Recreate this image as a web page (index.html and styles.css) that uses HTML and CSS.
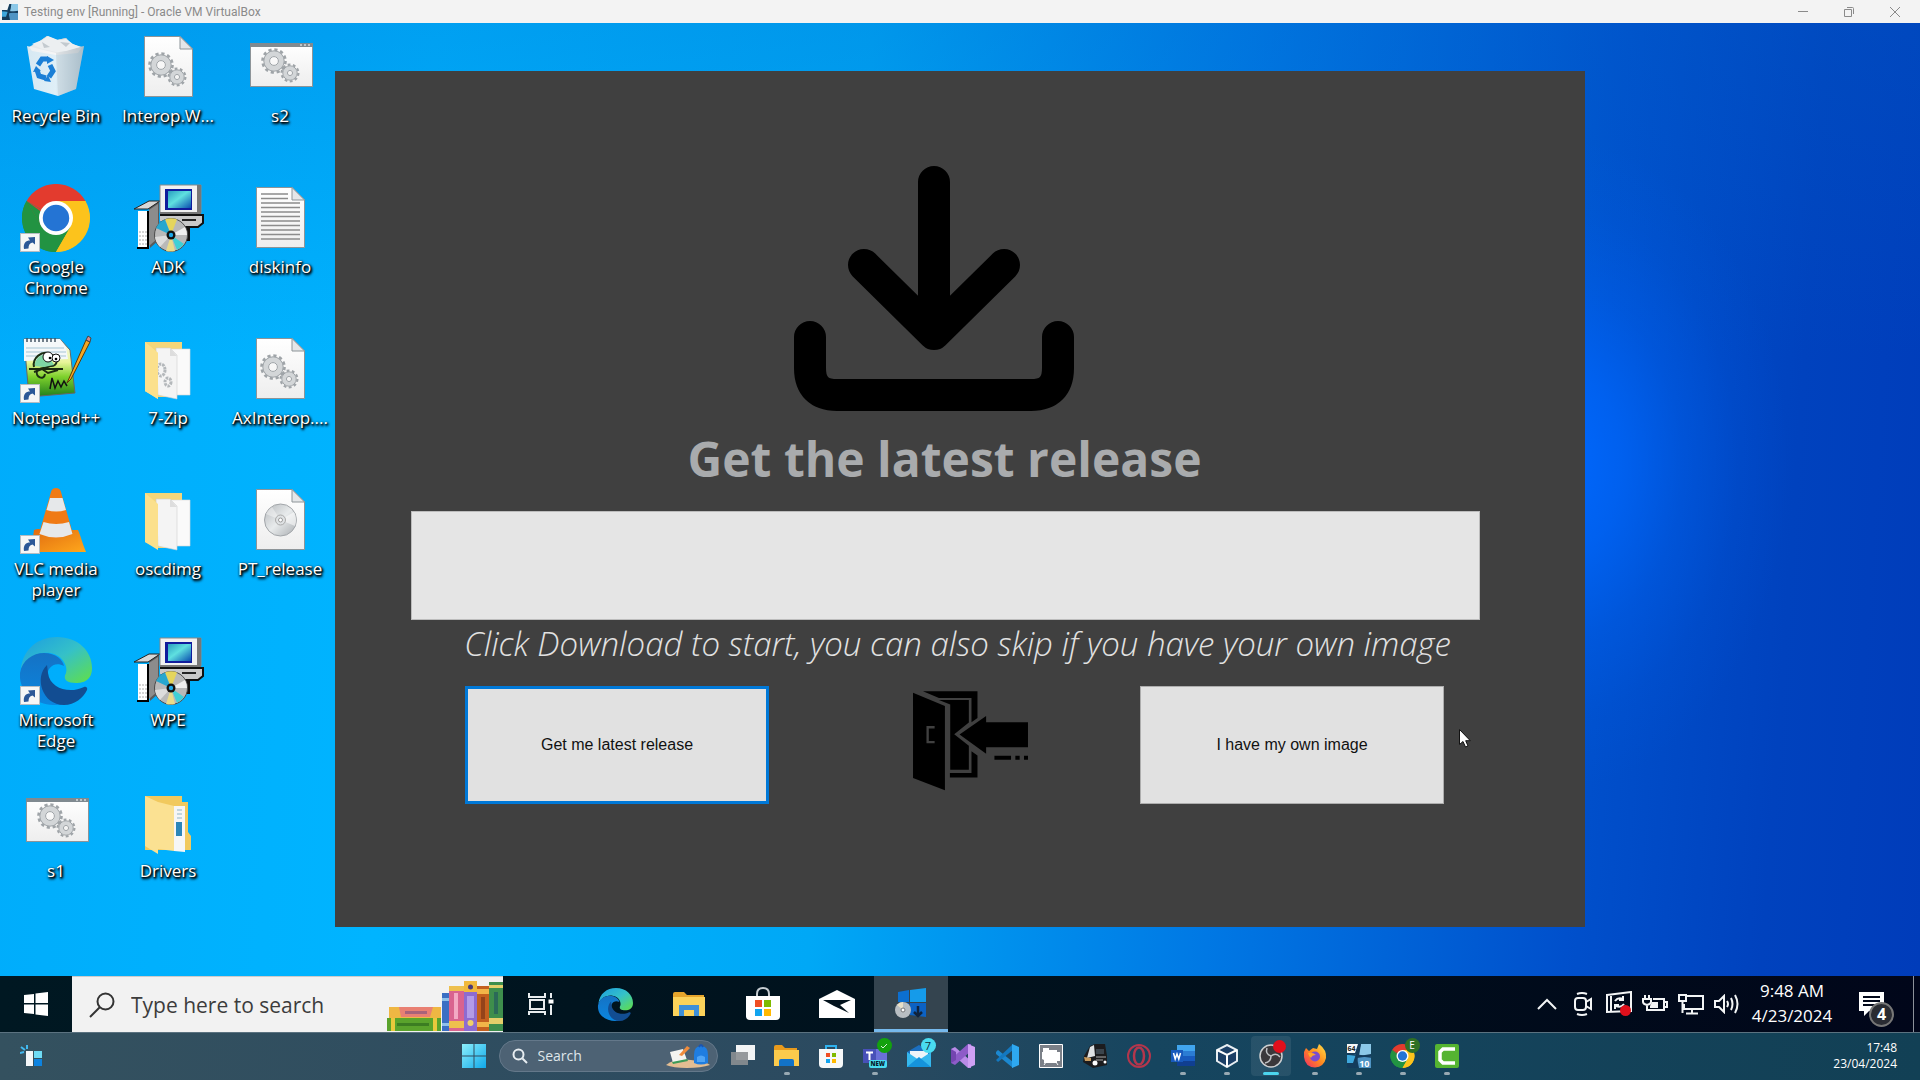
FILE: index.html
```html
<!DOCTYPE html>
<html lang="en">
<head>
<meta charset="utf-8">
<title>Testing env [Running] - Oracle VM VirtualBox</title>
<link rel="stylesheet" href="styles.css">
</head>
<body>
<svg class="defs" aria-hidden="true">
  <defs>
    <linearGradient id="gScreen" x1="0" y1="0" x2="1" y2="1"><stop offset="0" stop-color="#2a9fc0"/><stop offset=".45" stop-color="#5fe0e0"/><stop offset="1" stop-color="#0a4fb0"/></linearGradient>
    <linearGradient id="gEdgeTop" x1="0" y1="0" x2="1" y2="1"><stop offset="0" stop-color="#1b9de2"/><stop offset=".5" stop-color="#35c1c8"/><stop offset="1" stop-color="#62e045"/></linearGradient>
    <linearGradient id="gEdgeMid" x1="0" y1="0" x2="0" y2="1"><stop offset="0" stop-color="#1572c4"/><stop offset="1" stop-color="#0a86e0"/></linearGradient>
    <linearGradient id="gPage" x1="0" y1="0" x2="0" y2="1"><stop offset="0" stop-color="#ffffff"/><stop offset="1" stop-color="#eeeeee"/></linearGradient>
    <linearGradient id="gNote" x1="0" y1="0" x2="0" y2="1"><stop offset="0" stop-color="#f8f8f8"/><stop offset=".4" stop-color="#e8f59a"/><stop offset=".65" stop-color="#7ed12c"/><stop offset="1" stop-color="#1f7d1c"/></linearGradient>
    <linearGradient id="gCone" x1="0" y1="0" x2="1" y2="1"><stop offset="0" stop-color="#e06a10"/><stop offset="1" stop-color="#ffa81c"/></linearGradient>
    <linearGradient id="gDisc" x1="0" y1="0" x2="1" y2="1"><stop offset="0" stop-color="#b4b8bc"/><stop offset=".5" stop-color="#e8ebec"/><stop offset="1" stop-color="#a8acb0"/></linearGradient>
    <linearGradient id="gWin" x1="0" y1="0" x2="1" y2="1"><stop offset="0" stop-color="#8cf0fb"/><stop offset="1" stop-color="#10a8ea"/></linearGradient>
    <linearGradient id="gFox" x1="1" y1="0" x2="0" y2="1"><stop offset="0" stop-color="#ffe44a"/><stop offset=".5" stop-color="#ff8a1e"/><stop offset="1" stop-color="#f0266a"/></linearGradient>
    <linearGradient id="gBin" x1="0" y1="0" x2="1" y2="0"><stop offset="0" stop-color="#eef1f3"/><stop offset=".5" stop-color="#f8f8f8"/><stop offset="1" stop-color="#b9c3ca"/></linearGradient>

    <symbol id="gears" viewBox="0 0 40 40">
      <g fill="none" stroke="#9fa4a8">
        <circle cx="14" cy="14" r="11.5" stroke-width="2.6" stroke-dasharray="3.2 2.82"/>
        <circle cx="14" cy="14" r="7.4" stroke="#d3d6d8" stroke-width="5.6"/>
        <circle cx="14" cy="14" r="10.2" stroke-width="1"/>
        <circle cx="14" cy="14" r="4.4" stroke-width="1"/>
        <circle cx="30" cy="26" r="8.4" stroke-width="2.2" stroke-dasharray="2.8 2.48"/>
        <circle cx="30" cy="26" r="5" stroke="#d3d6d8" stroke-width="4"/>
        <circle cx="30" cy="26" r="7.2" stroke-width="1"/>
        <circle cx="30" cy="26" r="2.6" stroke-width="1"/>
      </g>
    </symbol>
    <symbol id="page" viewBox="0 0 72 72">
      <path d="M12.500 5.500H48L60.500 18V65.500H12.500Z" fill="url(#gPage)" stroke="#8d9498"/>
      <path d="M48 5.500V18H60.500Z" fill="#e4e6e8" stroke="#8d9498"/>
    </symbol>
    <symbol id="dll" viewBox="0 0 72 72"><use href="#page"/><use href="#gears" x="15" y="20" width="40" height="40"/></symbol>
    <symbol id="bat" viewBox="0 0 72 72">
      <rect x="6.500" y="12.500" width="62" height="43" fill="url(#gPage)" stroke="#8d9498"/>
      <path d="M6 12h63v4H6z" fill="#808a90"/><path d="M56 14h2m2 0h2m2 0h2" stroke="#fff"/>
      <use href="#gears" x="16" y="16" width="40" height="40"/>
    </symbol>
    <symbol id="txt" viewBox="0 0 72 72"><use href="#page"/>
      <path d="M17 12H44M17 16.500H44M17 21H56M17 25.500H56M17 30H56M17 34.500H56M17 39H56M17 43.500H56M17 48H56M17 52.500H56M17 57H56" stroke="#8c8c8c" stroke-width="1.300"/>
    </symbol>
    <symbol id="iso" viewBox="0 0 72 72"><use href="#page"/>
      <circle cx="36.500" cy="36" r="16" fill="url(#gDisc)" stroke="#a2a6aa"/>
      <path d="M36.500 36L50 28a16 16 0 0 1 1 14z" fill="#fff" opacity=".55"/><path d="M36.500 36L22 30a16 16 0 0 1 6-7z" fill="#fff" opacity=".4"/>
      <circle cx="36.500" cy="36" r="5" fill="#dfe2e4" stroke="#aaa"/><circle cx="36.500" cy="36" r="2" fill="#fff" stroke="#999"/>
    </symbol>
    <symbol id="short" viewBox="0 0 20 20">
      <rect x=".5" y=".5" width="19" height="18" fill="#f6f6f6" stroke="#b5bcc2"/>
      <path d="M4 16C3 10 6 7.500 10 7.500L8 4.500L15 4V11.500L12.500 9.500C9.500 10 8.500 12 8.500 15.500Z" fill="#2b5797"/>
    </symbol>
    <symbol id="bin" viewBox="0 0 72 72">
      <path d="M9 16L20 10L27 5L37 9L46 7L52 13L62 16L58 22L36 24L12 20Z" fill="#e6e9eb"/>
      <path d="M20 10L30 15L27 5zM37 9L34 18L50 16L46 7z" fill="#c8ced2"/><path d="M30 15L36 21L46 19z" fill="#fff"/>
      <path d="M7 15L36 22L64 15L56 58L38 65L14 58Z" fill="url(#gBin)" opacity=".9"/>
      <path d="M36 22L64 15L56 58L38 65Z" fill="#aeb9c1" opacity=".3"/>
      <path d="M12 13L22 9L28 5L38 9L46 8L53 13L60 16L46 20L36 21L22 18Z" fill="#eceff1"/>
      <path d="M22 11l8 5-6 1zM40 11l6 5 4-4z" fill="#c3cacf"/>
      <g fill="none" stroke="#1b7fd6" stroke-width="5"><path d="M18 34l4-6h6"/><path d="M30 34l3 6-4 6"/><path d="M26 47l-7-2-2-6"/></g>
      <path d="M27 25l7 4-7 4zM31 51l-7-1 4-6zM13 41l3-6 5 5z" fill="#1b7fd6"/>
    </symbol>
    <symbol id="chrome" viewBox="0 0 72 72">
      <path d="M36 36L4.800 18A36 36 0 0 1 67.200 18Z" fill="#e33b2e"/>
      <path d="M36 36L67.200 18A36 36 0 0 1 36 72Z" fill="#fcc31c"/>
      <path d="M36 36L36 72A36 36 0 0 1 4.800 18Z" fill="#229342"/>
      <path d="M36 18H67.200L36 36zM20.400 45L4.800 18 36 36z" fill="#e33b2e"/>
      <path d="M51.600 45L36 72V36z" fill="#fcc31c"/><path d="M20.400 45L4.800 18L24 32z" fill="#229342"/>
      <path d="M36 18H67.200A36 36 0 0 1 68 20L52 45L36 36z" fill="#fcc31c"/>
      <path d="M51.600 45L36 72A36 36 0 0 1 4.800 18L20.400 45L36 52z" fill="#229342"/>
      <path d="M51.600 45L36 72A36 36 0 0 0 71 30L52 30z" fill="#fcc31c"/>
      <circle cx="36" cy="36" r="18" fill="#fff"/><circle cx="36" cy="36" r="14" fill="#2474d4"/>
    </symbol>
    <symbol id="setup" viewBox="0 0 72 72">
      <path d="M17 22L27 19V58L18 66Z" fill="#5a5a5a"/><path d="M2 27L17 19H28L16 27Z" fill="#d8d8d8" stroke="#222"/>
      <path d="M6 29H16V66H6Z" fill="#fff"/><path d="M16 29V66H5" fill="none" stroke="#000" stroke-width="2"/>
      <path d="M7 50h8M7 54h8M7 58h8M7 62h8" stroke="#aaa" stroke-dasharray="2 1"/><path d="M17 28l9-6v34l-9 8z" fill="#8c8c8c"/>
      <path d="M28 33H70V41L66 45H44V39H28z" fill="#c9c9c9"/><path d="M28 33H71V41L66 45H50" fill="none" stroke="#111" stroke-width="2"/><path d="M50 38h14" stroke="#222" stroke-width="2"/>
      <path d="M28 3H69V31H28Z" fill="#f1f1f1" stroke="#888"/><path d="M65 3H69V32H28V30H65Z" fill="#777"/>
      <path d="M33 7H60V28H33Z" fill="#101c9c"/><path d="M36 9H59V26H36Z" fill="url(#gScreen)"/>
      <path d="M52 44h6v15h-6z" fill="#111"/>
      <circle cx="39" cy="53" r="16.500" fill="#b9b9b9" stroke="#4b4b4b"/>
      <path d="M39 53L33 37.500A17 17 0 0 1 45 37.500Z" fill="#e5d55c"/><path d="M39 53L33 37.500A17 17 0 0 0 24 46Z" fill="#27a7cf"/>
      <path d="M39 53L53 45A17 17 0 0 1 55 53Z" fill="#efefef"/><path d="M39 53L52 62A17 17 0 0 1 45 68Z" fill="#3fd0d6"/><path d="M39 53L43 69A17 17 0 0 1 34 69Z" fill="#e9dc8a"/><path d="M39 53L23 55A17 17 0 0 0 28 65Z" fill="#dcdcdc"/>
      <circle cx="39" cy="53" r="4.500" fill="#111"/><circle cx="39" cy="53" r="2.200" fill="#1da8e8"/>
    </symbol>
    <symbol id="npp" viewBox="0 0 72 72">
      <path d="M4 6H40L50 17L55 60L9 64Z" fill="url(#gNote)" stroke="#666"/>
      <path d="M4 6H40L46 14L48 26L4 28Z" fill="#f4f8fa"/><path d="M6 15h38M6 19h40M6 23h40" stroke="#a5c4d4"/>
      <path d="M7 5v4m4-4v4m4-4v4m4-4v4m4-4v4m4-4v4m4-4v4m4-4v4" stroke="#456" stroke-width="1.500"/>
      <path d="M14 34C12 25 22 17 30 21C40 24 38 34 30 33C24 36 20 34 17 38C15 44 24 48 25 41" fill="none" stroke="#1b2e13" stroke-width="2"/>
      <path d="M15 33C14 26 22 19 29 23L34 32L24 34Z" fill="#7ed6a4"/>
      <circle cx="28" cy="24" r="5" fill="#fff" stroke="#111"/><circle cx="36" cy="25" r="4" fill="#fff" stroke="#111"/><circle cx="30" cy="25" r="1.300"/><circle cx="36" cy="26" r="1.300"/>
      <path d="M9 36H43M14 39l8-3 6 4 10-3" stroke="#1b2a10" stroke-width="2" fill="none"/><path d="M30 56l2-11 3 10 3-7 3 6 3-6 3 5" fill="none" stroke="#111" stroke-width="1.500"/>
      <path d="M47 50L66 7L70 9L51 46Z" fill="#f4a723" stroke="#5b3a07"/><path d="M66 7L68 3L71 5L70 9Z" fill="#d88" stroke="#444"/>
    </symbol>
    <symbol id="vlc" viewBox="0 0 72 72">
      <path d="M14 46C18 44 24 46 24 46H50L58 46C60 50 62 58 66 68H11Z" fill="url(#gCone)"/>
      <path d="M36 4Q40 4 41 8L53 50Q36 58 19 50L31 8Q32 4 36 4Z" fill="#f07a14"/>
      <path d="M30 14H42.500L46 26Q36 29 26.500 26ZM23.500 38Q36 42 49 38L52.500 50Q36 57 19.500 50Z" fill="#e6e8ea"/>
    </symbol>
    <symbol id="folderfiles" viewBox="0 0 72 72">
      <path d="M13 9H50V24H58V60H45V64H26L13 58Z" fill="#f4d67a"/>
      <path d="M38 16H58V62H40Z" fill="#fafafa" stroke="#d8d8d8" stroke-width=".6"/><path d="M24 15H38L45 22V66L26 62Z" fill="#f4f4f4" stroke="#d0d0d0" stroke-width=".6"/>
      <path d="M38 15v8h7" fill="#ddd"/><path d="M13 9L26 20V66L13 58Z" fill="#fbe08c"/>
    </symbol>
    <symbol id="folderfull" viewBox="0 0 72 72">
      <path d="M13 10H50V16H56V46L59 50V64H13Z" fill="#f1c95e"/><path d="M42 20H53V66L42 65Z" fill="#f6f6f6"/><path d="M45 24h5M45 28h5M45 32h5" stroke="#8fb6c8"/><path d="M44 36h6v14h-6z" fill="#2c86b8"/>
      <path d="M13 10L26 16L42 20V65L26 63V68L13 60Z" fill="#fbe192"/>
    </symbol>
    <symbol id="edge" viewBox="0 0 72 72">
      <path d="M1 34C3 14 18 2 37 2C58 2 72 16 72 33C72 45 64 48 56 48C48 48 42 45 46 38C48 33 44 20 30 18C16 16 6 24 1 34Z" fill="url(#gEdgeTop)"/>
      <path d="M0 38C2 25 13 18 24 18C36 18 43 25 44 31C34 26 27 33 27 42C27 54 34 64 46 69C25 74 -2 62 0 38Z" fill="url(#gEdgeMid)"/>
      <path d="M27 30C14 42 22 70 44 70C55 70 63 63 67 55C68 53 66 51 64 52C50 59 30 54 28 38Z" fill="#124d92"/>
    </symbol>
    <symbol id="explorer" viewBox="0 0 34 26">
      <path d="M1 3Q1 1 3 1H12L15 4H32V24H1Z" fill="#e6a52c"/><path d="M1 6H33V25H1Z" fill="#fbd25a"/>
      <path d="M7 25V14H27V25H22V19H12V25Z" fill="#3d8fd8"/>
    </symbol>
    <symbol id="store" viewBox="0 0 36 34">
      <path d="M12 11V7Q12 1 18 1T24 7V11" fill="none" stroke="#c5ccd1" stroke-width="2"/><path d="M1 9H35V29Q35 33 31 33H5Q1 33 1 29Z" fill="#fff"/>
      <path d="M10 13h7v7h-7z" fill="#f04e23"/><path d="M19 13h7v7h-7z" fill="#7fba00"/><path d="M10 22h7v7h-7z" fill="#12a4ef"/><path d="M19 22h7v7h-7z" fill="#ffb900"/>
    </symbol>
    <symbol id="vboxmini" viewBox="0 0 24 24">
      <path d="M0 0H24V24H0Z" fill="#143c5c"/><path d="M0 0H11L8 9H0Z" fill="#f4f6f7"/><path d="M14 0H24V10L12 12Z" fill="#8cc8e8"/><path d="M0 11L9 10L6 19H0Z" fill="#3ea7dc"/><path d="M10 14L24 12V24H12Z" fill="#4f94c4"/>
      <path d="M13 0L8 24M0 10L24 13" stroke="#143c5c" stroke-width="1.500"/>
    </symbol>
  </defs>
</svg>

<header class="titlebar">
  <svg class="titlebar-icon" viewBox="0 0 24 24"><use href="#vboxmini"/></svg>
  <h1 class="titlebar-text">Testing env [Running] - Oracle VM VirtualBox</h1>
  <div class="window-controls">
    <button class="window-button" aria-label="Minimise"><svg width="12" height="12" viewBox="0 0 12 12"><path d="M1 5.500H11"/></svg></button>
    <button class="window-button" aria-label="Restore"><svg width="12" height="12" viewBox="0 0 12 12"><path d="M1.500 3.500H8.500V10.500H1.500ZM4 1.500H9.500Q10.500 1.500 10.500 2.500V8"/></svg></button>
    <button class="window-button" aria-label="Close"><svg width="12" height="12" viewBox="0 0 12 12"><path d="M1 1L11 11M11 1L1 11"/></svg></button>
  </div>
</header>

<main class="desktop">
  <ul class="shortcuts">
    <li class="shortcut"><svg class="shortcut-icon"><use href="#bin"/></svg><span>Recycle Bin</span></li>
    <li class="shortcut"><svg class="shortcut-icon" viewBox="0 0 72 72"><use href="#chrome" x="0" y="2" width="72" height="68"/><use href="#short" y="51" width="20" height="20"/></svg><span>Google<br>Chrome</span></li>
    <li class="shortcut"><svg class="shortcut-icon" viewBox="0 0 72 72"><use href="#npp"/><use href="#short" y="51" width="20" height="20"/></svg><span>Notepad++</span></li>
    <li class="shortcut"><svg class="shortcut-icon" viewBox="0 0 72 72"><use href="#vlc"/><use href="#short" y="51" width="20" height="20"/></svg><span>VLC media<br>player</span></li>
    <li class="shortcut"><svg class="shortcut-icon" viewBox="0 0 72 72"><use href="#edge"/><use href="#short" y="51" width="20" height="20"/></svg><span>Microsoft<br>Edge</span></li>
    <li class="shortcut"><svg class="shortcut-icon"><use href="#bat"/></svg><span>s1</span></li>
    <li class="shortcut"><svg class="shortcut-icon"><use href="#dll"/></svg><span>Interop.W...</span></li>
    <li class="shortcut"><svg class="shortcut-icon"><use href="#setup"/></svg><span>ADK</span></li>
    <li class="shortcut"><svg class="shortcut-icon" viewBox="0 0 72 72"><use href="#folderfiles"/><g fill="none" stroke="#b4b8bb" stroke-width="3" stroke-dasharray="2.500 1"><ellipse cx="29" cy="37" rx="4" ry="6"/><ellipse cx="36" cy="49" rx="3" ry="4"/></g><path d="M13 9L26 20V66L13 58Z" fill="#fbe08c"/></svg><span>7-Zip</span></li>
    <li class="shortcut"><svg class="shortcut-icon"><use href="#folderfiles"/></svg><span>oscdimg</span></li>
    <li class="shortcut"><svg class="shortcut-icon"><use href="#setup"/></svg><span>WPE</span></li>
    <li class="shortcut"><svg class="shortcut-icon"><use href="#folderfull"/></svg><span>Drivers</span></li>
    <li class="shortcut"><svg class="shortcut-icon"><use href="#bat"/></svg><span>s2</span></li>
    <li class="shortcut"><svg class="shortcut-icon"><use href="#txt"/></svg><span>diskinfo</span></li>
    <li class="shortcut"><svg class="shortcut-icon"><use href="#dll"/></svg><span>AxInterop....</span></li>
    <li class="shortcut"><svg class="shortcut-icon"><use href="#iso"/></svg><span>PT_release</span></li>
  </ul>

  <section class="installer" aria-labelledby="installer-title">
    <svg class="download-icon" viewBox="0 0 280 245" fill="none" stroke="#000" stroke-width="32" stroke-linecap="round" stroke-linejoin="round">
      <path d="M140 16V168M70 99L140 168L210 99"/><path d="M16 171V202Q16 229 43 229H237Q264 229 264 202V171"/>
    </svg>
    <h2 class="installer-title" id="installer-title">Get the latest release</h2>
    <progress class="installer-progress" value="0" max="100" aria-label="Download progress"></progress>
    <p class="installer-hint">Click Download to start, you can also skip if you have your own image</p>
    <div class="installer-actions">
      <button class="action action-focused">Get me latest release</button>
      <button class="exit" aria-label="Exit">
        <svg width="123" height="103" viewBox="60 30 370 310">
          <path d="M72 38L168 78V332L72 295Z"/><path d="M102 34H266V114L248 127V54H150Z"/><path d="M183 280H248V214L266 227V293H183Z"/>
          <path d="M150 60H240V128L196 163L240 198V270H184V74Z"/><path d="M212 164L292 108V127H418V202H292V222Z"/>
          <path d="M317 228h50v12h-50zM380 228h13v12h-13zM406 228h12v12h-12z"/><path d="M137 142H116V187H137" fill="none" stroke="#404040" stroke-width="7"/>
        </svg>
      </button>
      <button class="action">I have my own image</button>
    </div>
  </section>
  <svg class="cursor" viewBox="0 0 12 19"><path d="M.5 .5V15.500L4 12.500L6.500 18L9 17L6.700 11.700H11.300Z" fill="#fff" stroke="#111"/></svg>
</main>

<nav class="guest-bar" aria-label="Guest taskbar">
  <button class="guest-start" aria-label="Start"><svg width="26" height="26" viewBox="0 0 26 26"><path d="M1 4L11 3V12H1ZM12.500 2.500L25 1V12H12.500ZM1 13.500H11V23L1 22ZM12.500 13.500H25V25L12.500 23.500Z" fill="#fff"/></svg></button>
  <label class="guest-search">
    <svg width="26" height="26" viewBox="0 0 26 26" fill="none" stroke="#333" stroke-width="2"><circle cx="16.500" cy="9.500" r="8"/><path d="M11 15L1 25"/></svg>
    <input class="guest-search-input" type="text" placeholder="Type here to search" aria-label="Type here to search">
    <svg class="books" viewBox="0 0 116 52">
      <path d="M2 27h52v11H2z" fill="#efb743"/><path d="M12 27h34l-3 10H14z" fill="#e98073"/><path d="M18 31h22v3H18z" fill="#a8627a"/>
      <path d="M0 38h54v13H0z" fill="#5aa32c"/><path d="M4 38h4v13H4zM46 38h4v13h-4z" fill="#e9c93c"/><path d="M10 43h32v3H10z" fill="#3c7d22"/>
      <path d="M55 13h7v38h-7z" fill="#3a6fc4"/><path d="M55 18h7v3h-7zM55 43h7v3h-7z" fill="#8fc1ea"/>
      <path d="M62 6h15v45H62z" fill="#d9638f"/><path d="M62 6h15v5H62zM62 41h15v7H62z" fill="#eec04e"/><path d="M67 13h4v26h-4z" fill="#f3a9c4"/>
      <path d="M77 1h13v50H77z" fill="#8d6bd0"/><path d="M77 1h13v11H77z" fill="#f1b93c"/><circle cx="83.500" cy="7" r="2.500" fill="#4a3a7a"/><circle cx="83.500" cy="43" r="3" fill="#efd06a"/><path d="M80 16h7v22h-7z" fill="#b39be8"/>
      <path d="M90 6h12v45H90z" fill="#c4601f"/><path d="M90 9h12v5H90zM90 42h12v5H90z" fill="#f2b548"/><path d="M94 17h4v22h-4z" fill="#94431a"/>
      <path d="M102 2h14v49h-14z" fill="#3e8e4c"/><path d="M102 5h14v3h-14zM102 38h14v6h-14z" fill="#e5cf6a"/><path d="M107 12h4v22h-4z" fill="#2b6a58"/>
    </svg>
  </label>
  <button class="guest-taskview" aria-label="Task View"><svg width="26" height="24" viewBox="0 0 26 24" fill="none" stroke="#e8ecee" stroke-width="2"><path d="M1 1V5H17V1M2 8H16V17H2ZM1 23V20H17V23M23 1V6M23 13V23"/><path d="M20.500 7.500H25.500V11.500H20.500Z" fill="#fff" stroke="none"/></svg></button>
  <button class="guest-app" aria-label="Microsoft Edge"><svg width="37" height="35"><use href="#edge"/></svg></button>
  <button class="guest-app" aria-label="File Explorer"><svg width="34" height="26"><use href="#explorer"/></svg></button>
  <button class="guest-app" aria-label="Microsoft Store"><svg width="36" height="34"><use href="#store"/></svg></button>
  <button class="guest-app" aria-label="Mail"><svg width="38" height="28" viewBox="0 0 38 28"><path d="M1 9L19 0L37 9V28H1Z" fill="#fff"/><path d="M5 10H33L22 15L31 23L16 16Z" fill="#02121c"/></svg></button>
  <button class="guest-app guest-app-active" aria-label="Installer"><svg width="34" height="32" viewBox="0 0 34 32"><path d="M4 5L15 3V15H4Z" fill="#0c6fd0"/><path d="M16 3L32 1V15H16Z" fill="#159bea"/><path d="M6 16H15V28L6 26Z" fill="#0a58b4"/><path d="M16 16H32V30L16 28Z" fill="#0c62c4"/><path d="M24 19V28M20 25L24 29L28 25" fill="none" stroke="#10233c" stroke-width="2.500"/><circle cx="9" cy="23" r="8" fill="#b9bec2"/><path d="M9 23L3 18A8 8 0 0 1 9 15z" fill="#e9e0c8"/><circle cx="9" cy="23" r="2" fill="#fff" stroke="#777"/></svg></button>
  <div class="guest-tray">
    <button class="tray-button" aria-label="Show hidden icons"><svg width="20" height="12" viewBox="0 0 20 12"><path d="M1 11L10 2L19 11"/></svg></button>
    <button class="tray-button" aria-label="Meet Now"><svg width="20" height="24" viewBox="0 0 20 24"><path d="M4 2Q9 0 14 2M4 22Q9 24 14 22"/><rect x="2" y="6" width="11" height="12" rx="3"/><path d="M13 10L18 7V17L13 14"/></svg></button>
    <button class="tray-button" aria-label="Update status"><svg width="26" height="26" viewBox="0 0 26 26"><path d="M1 4L25 1V20L1 21ZM5 5V20M9 10Q12 6 17 8M17 5V9H13M18 13Q15 17 10 15M9 18V14H13"/><circle cx="19.500" cy="19.500" r="5.500" fill="#e0101c" stroke="none"/></svg></button>
    <button class="tray-button" aria-label="Battery"><svg width="26" height="20" viewBox="0 0 26 20"><path d="M3 1V5M7 1V5M1 5H9V8Q9 10 5 11Q1 10 1 8ZM5 11V16H9M11 5H22V16H9M23 8H25V13H23"/><path d="M10 8H16V14H8V12Z" fill="#f2f4f5" stroke="none"/></svg></button>
    <button class="tray-button" aria-label="Network"><svg width="26" height="22" viewBox="0 0 26 22"><path d="M9 3H25V16H6V11M8 20.500H20M14 16V20M1 2H8V8H1ZM4.500 8V20"/></svg></button>
    <button class="tray-button" aria-label="Volume"><svg width="26" height="20" viewBox="0 0 26 20"><path d="M1 7H5L10 2V18L5 13H1ZM13 7Q15 10 13 13M17 4Q20 10 17 16M21 1Q26 10 21 19"/></svg></button>
    <div class="guest-clock"><time>9:48 AM</time><time>4/23/2024</time></div>
    <button class="notifications" aria-label="Notifications, 4 new">
      <svg width="25" height="26" viewBox="0 0 25 26"><path d="M0 1H25V20H10L5 25V20H0Z" fill="#fff"/><path d="M4 6H21M4 10H21M4 14H16" stroke="#02081a" stroke-width="2"/></svg>
      <span class="notification-count">4</span>
    </button>
    <button class="show-desktop" aria-label="Show desktop"></button>
  </div>
</nav>

<nav class="host-bar" aria-label="Host taskbar">
  <button class="host-app" aria-label="Widgets"><svg width="22" height="22" viewBox="0 0 22 22"><path d="M6 6H13V21H6Z" fill="#f3f6f8"/><path d="M14 6H22V13H14Z" fill="#6fdcf5"/><path d="M14 14H22V21H14Z" fill="#0d83e0"/><path d="M0 8l4-1M1 2l4 3M7 0l0 4" stroke="#42b9f0" stroke-width="2"/></svg></button>
  <div class="host-center">
    <button class="host-app" aria-label="Start"><svg width="24" height="24" viewBox="0 0 24 24"><path d="M0 0h11.500v11.500H0zM12.500 0H24v11.500H12.500zM0 12.500h11.500V24H0zM12.500 12.500H24V24H12.500z" fill="url(#gWin)"/></svg></button>
    <label class="host-search">
      <svg width="16" height="16" viewBox="0 0 16 16" fill="none" stroke="#e8eef2" stroke-width="2"><circle cx="6.500" cy="6.500" r="5"/><path d="M10.500 10.500L15 15"/></svg>
      <input class="host-search-input" type="text" placeholder="Search" aria-label="Search">
      <svg width="46" height="26" viewBox="0 0 46 26"><path d="M1 22Q10 15 26 17T45 22Q36 25 22 25T1 22Z" fill="#e3bd92"/><path d="M5 9L18 6L22 17L8 20Z" fill="#f4f4f0"/><path d="M7 19L22 16L23 18L8 21Z" fill="#3c9a58"/><path d="M14 12L22 3L25 5L17 13Z" fill="#f08c3c"/><path d="M29 12Q29 3 36 3T43 12V20Q36 23 29 20Z" fill="#1f7de0"/><path d="M32 14Q36 11 40 14V19H32Z" fill="#4fa4f5"/><path d="M34 4Q36 0 38 4" stroke="#1b55b0" fill="none" stroke-width="2"/></svg>
    </label>
    <button class="host-app" aria-label="Task View"><svg width="24" height="24" viewBox="0 0 24 24"><path d="M5 1H24V16H5Z" fill="#f2f4f5"/><path d="M0 8H17V21H0Z" fill="#8b8f92" opacity=".9"/></svg></button>
    <button class="host-app host-app-running" aria-label="File Explorer"><svg width="25" height="24" viewBox="0 0 25 24"><path d="M0 3Q0 1 2 1H8L11 4H23V20H0Z" fill="#e89a1c"/><path d="M0 6H25V22H0Z" fill="#fccb4c"/><path d="M5 22V17Q5 15 7 15H18Q20 15 20 17V22Z" fill="#1273c8"/></svg></button>
    <button class="host-app" aria-label="Microsoft Store"><svg width="24" height="24" viewBox="0 0 24 24"><path d="M7 6V2H17V6" fill="none" stroke="#2fb2ee" stroke-width="2"/><path d="M0 5H24V20Q24 24 20 24H4Q0 24 0 20Z" fill="#f6f8f9"/><path d="M7 9h4v4H7z" fill="#f04e23"/><path d="M13 9h4v4h-4z" fill="#7fba00"/><path d="M7 15h4v4H7z" fill="#12a4ef"/><path d="M13 15h4v4h-4z" fill="#ffb900"/></svg></button>
    <button class="host-app host-app-running" aria-label="Teams"><svg width="24" height="24" viewBox="0 0 24 24"><path d="M9 5H24V18Q20 22 14 21L9 16Z" fill="#6a70d8"/><path d="M0 5H13V19H0Z" fill="#4850b8"/><path d="M3 8.500H10M6.500 8.500V16" stroke="#fff" stroke-width="2"/></svg><span class="badge badge-ok"><svg width="8" height="6" viewBox="0 0 8 6"><path d="M1 3L3 5L7 1" fill="none" stroke="#d7f0d7"/></svg></span><span class="badge-new">NEW</span></button>
    <button class="host-app" aria-label="Mail, 7 unread"><svg width="24" height="24" viewBox="0 0 24 24"><path d="M0 8L12 1L24 8V23H0Z" fill="#1b6fc0"/><path d="M3 7H21V15H3Z" fill="#eef4f8"/><path d="M0 8L12 16L24 8V23H0Z" fill="#35b8ee"/><path d="M0 23L12 13L24 23Z" fill="#1593dc"/></svg><span class="badge badge-mail">7</span></button>
    <button class="host-app" aria-label="Visual Studio"><svg width="24" height="24" viewBox="0 0 24 24"><path d="M0 5L4 3L20 17V24L17 24L0 9Z" fill="#b98be8"/><path d="M0 19L4 21L20 7V0H17L0 15Z" fill="#8d5cc8"/><path d="M0 5L5 8V16L0 19Z" fill="#7445b0"/><path d="M17 0L24 3V21L17 24Z" fill="#cfa0f4"/></svg></button>
    <button class="host-app" aria-label="Visual Studio Code"><svg width="24" height="24" viewBox="0 0 24 24"><path d="M1 8L3 6L18 18V24L1 10Z" fill="#1c88d0"/><path d="M1 16L18 0V6L3 18Z" fill="#1378c0"/><path d="M17 0L24 3V21L17 24Z" fill="#2ea8f0"/></svg></button>
    <button class="host-app" aria-label="Camera"><svg width="24" height="24" viewBox="0 0 24 24"><path d="M.5 .5H23.500V23.500H.5Z" fill="#7b8088" stroke="#fff"/><path d="M4 4H10V6H18V8H21V17H18V19H5V16L3 15V8H4Z" fill="#fff"/><path d="M5 21L7 18M19 21L17 18" stroke="#fff"/></svg></button>
    <button class="host-app" aria-label="Truck Simulator"><svg width="24" height="24" viewBox="0 0 24 24"><path d="M7 2L12 0H22L24 12V21L10 24L0 18L1 12Z" fill="#1c1c1e"/><path d="M7 3L11 1L12 12L4 14Z" fill="#dfe2e4"/><path d="M13 5H21V10H13Z" fill="#3b444c"/><path d="M13 13H23M13 16H20" stroke="#aaa"/><path d="M1 13L8 14V17L2 17Z" fill="#c79b5e"/><circle cx="12" cy="19" r="2.500" fill="#fff"/><circle cx="22" cy="18" r="1.500" fill="#fff"/></svg></button>
    <button class="host-app" aria-label="Opera"><svg width="24" height="24" viewBox="0 0 24 24" fill="none" stroke="#b3364c"><circle cx="12" cy="12" r="11" stroke-width="2"/><ellipse cx="12" cy="12" rx="5" ry="8.500" stroke-width="2.500"/></svg></button>
    <button class="host-app host-app-running" aria-label="Word"><svg width="24" height="24" viewBox="0 0 24 24"><path d="M6 1H24V7H6Z" fill="#41a5ee"/><path d="M6 7H24V12H6Z" fill="#2b7cd3"/><path d="M6 12H24V17H6Z" fill="#185abd"/><path d="M6 17H24V22H6Z" fill="#103f91"/><path d="M0 6H12V18H0Z" fill="#185abd"/><path d="M2.500 9L4.200 15L6 10L7.800 15L9.500 9" fill="none" stroke="#fff" stroke-width="1.500"/></svg></button>
    <button class="host-app host-app-running" aria-label="VirtualBox"><svg width="22" height="24" viewBox="0 0 22 24"><path d="M11 1L21 6V17L11 23L1 17V6Z" fill="#1b3f66" stroke="#e8eef2" stroke-width="2"/><path d="M1 6L11 11L21 6M11 11V23" fill="none" stroke="#fff" stroke-width="2"/></svg></button>
    <button class="host-app host-app-current" aria-label="OBS Studio"><svg width="24" height="24" viewBox="0 0 24 24"><circle cx="12" cy="12" r="11" fill="#2a282b" stroke="#c9cbcd" stroke-width="1.500"/><g fill="none" stroke="#b9bcbf" stroke-width="1.500"><path d="M12 12Q6 10 8 4"/><path d="M12 12Q17 8 21 13"/><path d="M12 12Q12 18 6 19"/></g></svg><span class="badge badge-record"></span></button>
    <button class="host-app host-app-running" aria-label="Firefox"><svg width="24" height="24" viewBox="0 0 24 24"><path d="M1 8L3 4L6 7L10 4L14 5L16 0Q24 6 23 14Q21 23 12 23.500Q2 23 1 13Z" fill="url(#gFox)"/><circle cx="12" cy="12.500" r="5" fill="#7a4bd0"/><path d="M5 9Q10 8 13 11Q9 11 8 14Q6 13 5 9" fill="#ffa52a"/></svg></button>
    <button class="host-app host-app-running" aria-label="Testing env"><svg width="24" height="24" viewBox="0 0 24 24"><use href="#vboxmini"/></svg><span class="tag tag-bits">64</span><span class="tag tag-version">10</span></button>
    <button class="host-app host-app-running" aria-label="Google Chrome"><svg width="25" height="24"><use href="#chrome"/></svg><span class="badge badge-profile">E</span></button>
    <button class="host-app host-app-running" aria-label="Camtasia"><svg width="24" height="24" viewBox="0 0 24 24"><rect width="24" height="24" rx="2" fill="#55b431"/><path d="M20 5H8L5 8V16L8 19H20" fill="none" stroke="#fff" stroke-width="3.500"/></svg></button>
  </div>
  <div class="host-clock"><time>17:48</time><time>23/04/2024</time></div>
</nav>
</body>
</html>
```
FILE: styles.css
```css
* { box-sizing: border-box; }

body {
  margin: 0;
  min-height: 100vh;
  display: grid;
  grid-template-rows: 23px 1fr 56px 48px;
  font-family: "Open Sans", "Noto Sans", sans-serif;
  color: #fff;
}

button { padding: 0; border: 0; background: none; color: inherit; font: inherit; }
svg { display: block; flex: none; }
.defs { position: absolute; width: 0; height: 0; }

/* VirtualBox window frame */
.titlebar { display: flex; align-items: center; background: #f3f3f3; color: #8a8a8a; }
.titlebar-icon { width: 16px; height: 16px; margin: 0 6px 0 2px; }
.titlebar-text { margin: 0; font: 400 12px/16px Roboto, sans-serif; }
.window-controls { display: flex; margin-left: auto; padding-right: 2px; }
.window-button { display: grid; place-items: center; width: 46px; height: 20px; fill: none; stroke: #8a8a8a; }

/* Guest desktop */
.desktop {
  position: relative;
  min-height: 953px;
  background:
    radial-gradient(ellipse 240px 330px at 1550px 440px, #0068ff, #0068ffb0 30%, #0068ff50 55%, #0068ff18 78%, #0068ff00),
    linear-gradient(180deg, #0064c840, transparent 35%),
    linear-gradient(94deg, #00acfb 0, #00b4ff 22%, #00a8f6 44%, #0078e4 64%, #0050cc 82%, #0042be 92%, #003cba 100%);
}
.shortcuts {
  display: grid;
  grid-template-rows: repeat(6, 151px);
  grid-auto-columns: 112px;
  grid-auto-flow: column;
  margin: 0;
  padding: 8px 0 0;
  list-style: none;
}
.shortcut {
  display: flex;
  flex-direction: column;
  align-items: center;
  gap: 2px;
  font-size: 17px;
  line-height: 21px;
  text-align: center;
  white-space: nowrap;
  text-shadow: 1px 1px 2px #000, 1px 2px 3px #000, 1px 1px 3px #000;
}
.shortcut-icon { width: 72px; height: 72px; }

/* Installer window */
.installer {
  position: absolute;
  left: 335px;
  right: 335px;
  top: 48px;
  bottom: 49px;
  display: flex;
  flex-direction: column;
  align-items: center;
  padding: 95px 105px 0 76px;
  background: #404040;
}
.download-icon { width: 280px; height: 245px; margin-right: 24px; }
.installer-title { margin: 16px 2px 0 0; color: #a9abad; font-size: 48px; line-height: 64px; font-weight: 700; white-space: nowrap; }
.installer-progress { appearance: none; width: 100%; height: 109px; margin-top: 20px; border: 1px solid #bcbcbc; background: #e5e5e5; }
.installer-progress::-webkit-progress-bar { background: #e5e5e5; }
.installer-hint { margin: 2px 0 0 24px; color: #e2e2e2; font-size: 33px; line-height: 44px; font-weight: 300; font-style: italic; white-space: nowrap; }
.installer-actions { display: flex; align-self: stretch; align-items: center; justify-content: space-between; margin-top: 20px; padding: 0 36px 0 54px; }
.action { width: 304px; height: 118px; border: 1px solid #adadad; background: #e1e1e1; color: #111; font: 16px/20px "Liberation Sans", Arial, sans-serif; }
.action-focused { border: 3px solid #0078d7; }
.exit { margin: 0 0 8px 32px; }
.cursor { position: absolute; left: 1459px; top: 706px; width: 12px; height: 19px; }

/* Guest taskbar */
.guest-bar { display: flex; background: linear-gradient(90deg, #001822, #00101c 60%, #01061a); }
.guest-bar > button, .guest-tray > button { display: grid; place-items: center; }
.guest-start { width: 72px; }
.guest-search { display: flex; align-items: center; width: 431px; padding-left: 17px; border-top: 1px solid #ccc; background: #f2f2f2; }
.guest-search-input { flex: 1; min-width: 0; margin-left: 16px; padding: 0; border: 0; background: none; font: 21px/28px "Open Sans", sans-serif; }
.guest-search-input::placeholder { color: #3c3c3c; opacity: 1; }
.books { width: 116px; height: 52px; align-self: flex-end; }
.guest-taskview { width: 75px; }
.guest-app { width: 74px; }
.guest-app-active { background: #34444f; border-bottom: 3px solid #76b9ed; }
.guest-tray { display: flex; margin-left: auto; }
.tray-button { width: 36px; fill: none; stroke: #f2f4f5; stroke-width: 2; }
.guest-clock { display: flex; flex-direction: column; justify-content: center; width: 94px; padding-bottom: 2px; text-align: center; font-size: 17px; line-height: 25px; }
.notifications { position: relative; width: 74px; }
.notifications svg { margin-right: 10px; }
.notification-count { position: absolute; left: 30px; top: 26px; width: 25px; height: 25px; border: 2px solid #777; border-radius: 50%; background: #2a2c33; font-size: 16px; line-height: 21px; font-weight: 700; }
.show-desktop { width: 7px; border-left: 1px solid #8c919a; }

/* Host taskbar */
.host-bar { display: grid; grid-template-columns: 1fr auto 1fr; align-items: start; padding: 0 23px 0 9px; border-top: 1px solid #5b7280; background: linear-gradient(90deg, #34515f, #2b4a60 45%, #16455f 60%, #124055); }
.host-center { display: flex; align-items: center; margin-left: 14px; }
.host-app { position: relative; display: grid; place-items: center; width: 44px; height: 46px; }
.host-search { display: flex; align-items: center; width: 219px; height: 32px; margin: 0 3px; padding: 0 6px 0 12px; border: 1px solid #64788a; border-radius: 16px; background: #4d6274; }
.host-search-input { flex: 1; min-width: 0; margin-left: 10px; padding: 0; border: 0; background: none; font: 14px/20px "Open Sans", sans-serif; }
.host-search-input::placeholder { color: #dfe6ea; opacity: 1; }
.host-app-running::after, .host-app-current::after { content: ""; position: absolute; left: 19px; bottom: 4px; width: 6px; height: 3px; border-radius: 2px; background: #98a9b3; }
.host-app-current::after { left: 14px; width: 16px; background: #4cd5ee; }
.host-app-current::before { content: ""; position: absolute; inset: 3px 2px; border-radius: 4px; background: #ffffff14; }
.badge { position: absolute; top: 5px; left: 24px; display: grid; place-items: center; width: 15px; height: 15px; border-radius: 50%; font-size: 11px; line-height: 15px; }
.badge-ok { background: #13a10e; }
.badge-mail { background: #49dcf0; color: #10303c; }
.badge-record { top: 7px; width: 13px; height: 13px; background: #e0101c; }
.badge-profile { background: #2f7024; font-size: 10px; }
.badge-new { position: absolute; left: 16px; top: 27px; padding: 0 2px; border-radius: 2px; background: #49dcf0; color: #06202a; font-size: 6px; line-height: 8px; font-weight: 800; }
.tag { position: absolute; font-size: 7px; line-height: 7px; font-weight: 700; }
.tag-bits { left: 11px; top: 12px; color: #222; }
.tag-version { right: 11px; bottom: 12px; font-size: 9px; }
.host-clock { display: flex; flex-direction: column; padding-top: 7px; text-align: right; font-size: 12px; line-height: 16px; }
```
